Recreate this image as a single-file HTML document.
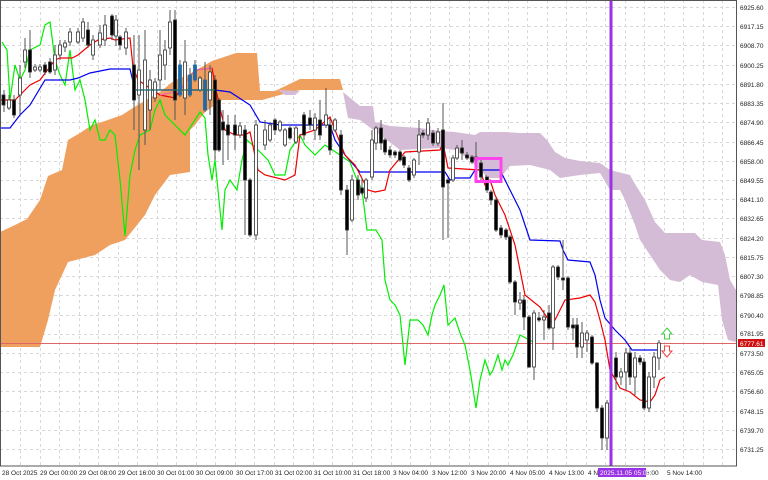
<!DOCTYPE html>
<html><head><meta charset="utf-8"><style>
html,body{margin:0;padding:0;background:#fff;width:768px;height:480px;overflow:hidden}
svg{display:block;font-family:"Liberation Sans",sans-serif}
</style></head><body>
<svg width="768" height="480" viewBox="0 0 768 480">
<rect width="768" height="480" fill="#fff"/>
<g stroke="#d8d8d8" stroke-width="1" stroke-dasharray="3,3">
<line x1="0" y1="7.5" x2="736" y2="7.5"/><line x1="0" y1="26.5" x2="736" y2="26.5"/><line x1="0" y1="45.5" x2="736" y2="45.5"/><line x1="0" y1="65.5" x2="736" y2="65.5"/><line x1="0" y1="84.5" x2="736" y2="84.5"/><line x1="0" y1="103.5" x2="736" y2="103.5"/><line x1="0" y1="122.5" x2="736" y2="122.5"/><line x1="0" y1="142.5" x2="736" y2="142.5"/><line x1="0" y1="161.5" x2="736" y2="161.5"/><line x1="0" y1="180.5" x2="736" y2="180.5"/><line x1="0" y1="199.5" x2="736" y2="199.5"/><line x1="0" y1="218.5" x2="736" y2="218.5"/><line x1="0" y1="238.5" x2="736" y2="238.5"/><line x1="0" y1="257.5" x2="736" y2="257.5"/><line x1="0" y1="276.5" x2="736" y2="276.5"/><line x1="0" y1="295.5" x2="736" y2="295.5"/><line x1="0" y1="315.5" x2="736" y2="315.5"/><line x1="0" y1="334.5" x2="736" y2="334.5"/><line x1="0" y1="353.5" x2="736" y2="353.5"/><line x1="0" y1="372.5" x2="736" y2="372.5"/><line x1="0" y1="391.5" x2="736" y2="391.5"/><line x1="0" y1="411.5" x2="736" y2="411.5"/><line x1="0" y1="430.5" x2="736" y2="430.5"/><line x1="0" y1="449.5" x2="736" y2="449.5"/>
<line x1="20.5" y1="0" x2="20.5" y2="466"/><line x1="40.5" y1="0" x2="40.5" y2="466"/><line x1="59.5" y1="0" x2="59.5" y2="466"/><line x1="79.5" y1="0" x2="79.5" y2="466"/><line x1="98.5" y1="0" x2="98.5" y2="466"/><line x1="118.5" y1="0" x2="118.5" y2="466"/><line x1="137.5" y1="0" x2="137.5" y2="466"/><line x1="157.5" y1="0" x2="157.5" y2="466"/><line x1="176.5" y1="0" x2="176.5" y2="466"/><line x1="196.5" y1="0" x2="196.5" y2="466"/><line x1="215.5" y1="0" x2="215.5" y2="466"/><line x1="235.5" y1="0" x2="235.5" y2="466"/><line x1="254.5" y1="0" x2="254.5" y2="466"/><line x1="274.5" y1="0" x2="274.5" y2="466"/><line x1="293.5" y1="0" x2="293.5" y2="466"/><line x1="313.5" y1="0" x2="313.5" y2="466"/><line x1="332.5" y1="0" x2="332.5" y2="466"/><line x1="352.5" y1="0" x2="352.5" y2="466"/><line x1="371.5" y1="0" x2="371.5" y2="466"/><line x1="391.5" y1="0" x2="391.5" y2="466"/><line x1="410.5" y1="0" x2="410.5" y2="466"/><line x1="430.5" y1="0" x2="430.5" y2="466"/><line x1="449.5" y1="0" x2="449.5" y2="466"/><line x1="469.5" y1="0" x2="469.5" y2="466"/><line x1="488.5" y1="0" x2="488.5" y2="466"/><line x1="508.5" y1="0" x2="508.5" y2="466"/><line x1="527.5" y1="0" x2="527.5" y2="466"/><line x1="547.5" y1="0" x2="547.5" y2="466"/><line x1="566.5" y1="0" x2="566.5" y2="466"/><line x1="586.5" y1="0" x2="586.5" y2="466"/><line x1="605.5" y1="0" x2="605.5" y2="466"/><line x1="625.5" y1="0" x2="625.5" y2="466"/><line x1="644.5" y1="0" x2="644.5" y2="466"/><line x1="664.5" y1="0" x2="664.5" y2="466"/><line x1="683.5" y1="0" x2="683.5" y2="466"/><line x1="703.5" y1="0" x2="703.5" y2="466"/><line x1="722.5" y1="0" x2="722.5" y2="466"/>
</g>
<polygon fill="#f0a05e" points="0,232 15,225 27,219 40,200 48,176 62,170 68,140 80,133 92,125 105,121 122,115 136,106 160,92 175,80 188,75 212,61 236,53 257,53 260,91 275,91 300,79 340,79 343,90 300,90 280,95 262,100 240,100 222,100 205,112 195,125 190,130 190,172 170,175 155,195 145,215 125,240 110,245 95,255 68,262 55,290 48,320 40,347 0,347"/>
<polygon fill="#d5bcd6" points="278,90 300,91 295,95 285,95"/>
<polygon fill="#d5bcd6" points="343,92 360,106 373,106 375,122 390,126 420,128 440,131 455,132 475,135 480,132 505,132 520,133 540,133 547,140 555,152 565,158 580,161 600,163 610,170 630,175 635,184 645,200 655,222 665,233 695,233 702,240 720,242 725,255 730,280 736,290 736,342 728,340 722,320 718,285 702,282 690,275 680,282 670,280 660,270 650,255 640,240 635,225 625,200 620,190 610,190 600,173 580,175 560,178 550,170 530,165 510,166 500,178 488,178 470,160 455,150 440,148 400,150 380,135 360,120 348,118"/>
<line x1="0" y1="343.5" x2="736" y2="343.5" stroke="#d66" stroke-width="1"/>
<polyline fill="none" stroke="#00ee00" stroke-width="1.2" points="2,42 7,50 10,100 15,65 20,80 25,70 30,50 40,45 45,25 50,22 55,60 60,75 65,85 70,50 75,90 80,80 85,100 90,130 95,120 100,140 105,140 110,130 115,135 120,180 125,236 130,175 135,150 140,135 150,130 155,110 160,100 165,115 175,125 185,135 195,120 200,112 205,118 208,155 212,180 215,160 222,230 225,190 230,180 237,190 242,160 247,140 258,150 268,160 275,175 285,175 290,150 300,135 305,145 315,155 325,145 340,155 350,162 355,175 362,190 367,230 376,230 382,240 385,280 390,300 395,305 400,315 405,365 410,320 418,320 423,325 428,335 432,315 435,305 440,295 444,285 448,325 455,318 460,333 465,345 470,370 476,408 480,380 485,360 490,375 493,370 498,355 502,370 505,360 508,365 513,355 520,335 535,343"/>
<polyline fill="none" stroke="#0000ee" stroke-width="1.2" points="0,128 10,128 20,115 30,105 45,80 70,80 78,78 90,73 110,69 130,69 135,90 215,90 230,92 250,105 260,122 280,125 330,125 335,140 345,155 360,172 445,172 450,180 455,178 470,178 475,170 500,170 505,180 510,190 515,200 520,210 530,240 560,241 563,250 568,260 590,262 595,275 600,300 605,318 615,330 625,340 632,350 660,350"/>
<polyline fill="none" stroke="#ee0000" stroke-width="1.2" points="0,100 15,100 20,95 30,85 40,80 55,60 60,58 72,58 78,55 90,45 98,40 110,38 115,40 130,38 133,67 138,80 160,95 175,98 180,90 195,70 212,68 216,90 225,130 235,135 245,135 250,132 258,170 265,175 285,180 295,175 300,135 315,130 330,117 335,130 345,155 355,165 368,190 375,192 385,190 390,170 405,152 440,150 443,143 448,168 480,170 485,185 490,180 495,195 505,215 515,245 520,270 525,295 540,307 550,322 555,320 560,310 565,300 580,298 590,295 595,302 600,320 605,340 610,370 620,388 630,392 640,400 650,402 655,395 660,380 665,377"/>
<polyline fill="none" stroke="#ee66aa" stroke-width="1.2" points="160,95 170,93 180,90 195,70 212,68"/>
<g stroke="#555" stroke-width="1">
<line x1="4" y1="90" x2="4" y2="112"/><line x1="9" y1="95" x2="9" y2="110"/><line x1="14" y1="95" x2="14" y2="118"/><line x1="20" y1="65" x2="20" y2="115"/><line x1="25" y1="38" x2="25" y2="68"/><line x1="30" y1="30" x2="30" y2="78"/><line x1="35" y1="64" x2="35" y2="72"/><line x1="40" y1="64" x2="40" y2="72"/><line x1="45" y1="62" x2="45" y2="75"/><line x1="50" y1="58" x2="50" y2="74"/><line x1="55" y1="45" x2="55" y2="75"/><line x1="60" y1="40" x2="60" y2="60"/><line x1="65" y1="40" x2="65" y2="52"/><line x1="70" y1="28" x2="70" y2="46"/><line x1="78" y1="28" x2="78" y2="44"/><line x1="83" y1="18" x2="83" y2="42"/><line x1="88" y1="22" x2="88" y2="48"/><line x1="93" y1="35" x2="93" y2="60"/><line x1="100" y1="25" x2="100" y2="48"/><line x1="105" y1="15" x2="105" y2="46"/><line x1="112" y1="14" x2="112" y2="40"/><line x1="116" y1="15" x2="116" y2="46"/><line x1="120" y1="35" x2="120" y2="50"/><line x1="126" y1="28" x2="126" y2="55"/>
<line x1="134" y1="35" x2="134" y2="130"/><line x1="139" y1="35" x2="139" y2="170"/><line x1="145" y1="30" x2="145" y2="145"/><line x1="150" y1="70" x2="150" y2="130"/><line x1="155" y1="78" x2="155" y2="102"/><line x1="160" y1="30" x2="160" y2="90"/><line x1="165" y1="40" x2="165" y2="80"/><line x1="170" y1="10" x2="170" y2="55"/><line x1="175" y1="10" x2="175" y2="120"/><line x1="180" y1="60" x2="180" y2="97"/><line x1="185" y1="40" x2="185" y2="115"/><line x1="190" y1="68" x2="190" y2="97"/><line x1="195" y1="60" x2="195" y2="82"/><line x1="200" y1="76" x2="200" y2="92"/><line x1="205" y1="62" x2="205" y2="112"/><line x1="210" y1="65" x2="210" y2="115"/><line x1="215" y1="75" x2="215" y2="160"/>
<line x1="219" y1="98" x2="219" y2="152"/><line x1="223" y1="110" x2="223" y2="165"/><line x1="228" y1="115" x2="228" y2="160"/><line x1="235" y1="115" x2="235" y2="150"/><line x1="240" y1="122" x2="240" y2="138"/><line x1="245" y1="125" x2="245" y2="235"/><line x1="250" y1="178" x2="250" y2="237"/><line x1="256" y1="120" x2="256" y2="240"/><line x1="265" y1="120" x2="265" y2="150"/><line x1="270" y1="122" x2="270" y2="142"/><line x1="275" y1="118" x2="275" y2="135"/><line x1="280" y1="120" x2="280" y2="132"/><line x1="285" y1="128" x2="285" y2="147"/><line x1="290" y1="126" x2="290" y2="140"/><line x1="296" y1="126" x2="296" y2="144"/><line x1="304" y1="112" x2="304" y2="140"/><line x1="310" y1="110" x2="310" y2="130"/><line x1="315" y1="113" x2="315" y2="140"/><line x1="320" y1="100" x2="320" y2="140"/><line x1="326" y1="88" x2="326" y2="128"/><line x1="330" y1="118" x2="330" y2="155"/><line x1="335" y1="118" x2="335" y2="132"/><line x1="341" y1="130" x2="341" y2="195"/><line x1="347" y1="185" x2="347" y2="255"/><line x1="352" y1="175" x2="352" y2="222"/><line x1="358" y1="175" x2="358" y2="200"/><line x1="362" y1="178" x2="362" y2="195"/><line x1="366" y1="178" x2="366" y2="202"/>
<line x1="372" y1="130" x2="372" y2="180"/><line x1="376" y1="126" x2="376" y2="150"/><line x1="381" y1="120" x2="381" y2="150"/><line x1="385" y1="138" x2="385" y2="155"/><line x1="390" y1="146" x2="390" y2="158"/><line x1="395" y1="150" x2="395" y2="158"/><line x1="400" y1="150" x2="400" y2="162"/><line x1="404" y1="155" x2="404" y2="168"/><line x1="409" y1="165" x2="409" y2="182"/><line x1="414" y1="158" x2="414" y2="178"/><line x1="419" y1="120" x2="419" y2="165"/><line x1="423" y1="130" x2="423" y2="138"/><line x1="428" y1="118" x2="428" y2="140"/><line x1="433" y1="130" x2="433" y2="146"/><line x1="438" y1="128" x2="438" y2="146"/><line x1="443" y1="103" x2="443" y2="240"/><line x1="448" y1="178" x2="448" y2="238"/><line x1="453" y1="155" x2="453" y2="182"/><line x1="457" y1="145" x2="457" y2="160"/><line x1="462" y1="140" x2="462" y2="160"/><line x1="467" y1="152" x2="467" y2="160"/><line x1="472" y1="155" x2="472" y2="164"/><line x1="476" y1="142" x2="476" y2="180"/><line x1="481" y1="160" x2="481" y2="180"/><line x1="486" y1="175" x2="486" y2="182"/><line x1="487" y1="182" x2="487" y2="193"/><line x1="491" y1="190" x2="491" y2="205"/><line x1="496" y1="198" x2="496" y2="232"/><line x1="501" y1="225" x2="501" y2="238"/><line x1="506" y1="228" x2="506" y2="240"/><line x1="510" y1="235" x2="510" y2="284"/><line x1="515" y1="280" x2="515" y2="315"/><line x1="520" y1="292" x2="520" y2="310"/><line x1="524" y1="295" x2="524" y2="330"/><line x1="529" y1="315" x2="529" y2="368"/><line x1="534" y1="310" x2="534" y2="380"/><line x1="539" y1="312" x2="539" y2="322"/><line x1="544" y1="310" x2="544" y2="340"/><line x1="549" y1="305" x2="549" y2="330"/><line x1="553" y1="265" x2="553" y2="350"/><line x1="558" y1="265" x2="558" y2="280"/><line x1="563" y1="240" x2="563" y2="290"/><line x1="568" y1="276" x2="568" y2="330"/><line x1="573" y1="318" x2="573" y2="340"/><line x1="577" y1="318" x2="577" y2="358"/><line x1="582" y1="322" x2="582" y2="358"/><line x1="587" y1="330" x2="587" y2="352"/><line x1="592" y1="335" x2="592" y2="365"/><line x1="597" y1="362" x2="597" y2="412"/><line x1="602" y1="405" x2="602" y2="450"/><line x1="607" y1="400" x2="607" y2="450"/><line x1="616" y1="352" x2="616" y2="390"/><line x1="621" y1="368" x2="621" y2="385"/><line x1="626" y1="348" x2="626" y2="390"/><line x1="630" y1="348" x2="630" y2="385"/><line x1="635" y1="352" x2="635" y2="395"/><line x1="640" y1="355" x2="640" y2="365"/><line x1="644" y1="358" x2="644" y2="410"/><line x1="649" y1="372" x2="649" y2="412"/><line x1="654" y1="352" x2="654" y2="388"/><line x1="659" y1="340" x2="659" y2="370"/>
</g>
<g stroke="#333" stroke-width="0.8">
<rect x="2" y="95" width="3" height="10" fill="#000"/><rect x="7.5" y="100" width="3" height="8" fill="#fff"/><rect x="12.5" y="100" width="3" height="15" fill="#000"/><rect x="18.5" y="78" width="3" height="17" fill="#fff"/><rect x="23.5" y="50" width="3" height="12" fill="#fff"/><rect x="28.5" y="50" width="3" height="22" fill="#000"/><rect x="33.5" y="67" width="3" height="3" fill="#fff"/><rect x="38.5" y="67" width="3" height="3" fill="#fff"/><rect x="43.5" y="65" width="3" height="7" fill="#000"/><rect x="48.5" y="62" width="3" height="10" fill="#000"/><rect x="53.5" y="55" width="3" height="15" fill="#fff"/><rect x="58.5" y="45" width="3" height="10" fill="#fff"/><rect x="63.5" y="43" width="3" height="4" fill="#fff"/><rect x="68.5" y="32" width="3" height="10" fill="#fff"/><rect x="76.5" y="32" width="3" height="10" fill="#fff"/><rect x="81.5" y="22" width="3" height="16" fill="#fff"/><rect x="86.5" y="30" width="3" height="15" fill="#000"/><rect x="91.5" y="40" width="3" height="15" fill="#fff"/><rect x="98.5" y="33" width="3" height="12" fill="#fff"/><rect x="103.5" y="25" width="3" height="15" fill="#fff"/><rect x="110.5" y="16" width="3" height="19" fill="#000"/><rect x="114.5" y="20" width="3" height="16" fill="#fff"/><rect x="118.5" y="37" width="3" height="8" fill="#000"/><rect x="124.5" y="32" width="3" height="16" fill="#fff"/>
<rect x="132.5" y="65" width="3" height="35" fill="#000"/><rect x="137.5" y="70" width="3" height="25" fill="#fff"/><rect x="143.5" y="60" width="3" height="70" fill="#fff"/><rect x="148.5" y="80" width="3" height="30" fill="#fff"/><rect x="153.5" y="82" width="3" height="16" fill="#fff"/><rect x="158.5" y="55" width="3" height="25" fill="#fff"/><rect x="163.5" y="50" width="3" height="15" fill="#fff"/><rect x="168.5" y="22" width="3" height="26" fill="#fff"/><rect x="173.5" y="20" width="3" height="80" fill="#000"/><rect x="178.5" y="65" width="3" height="30" fill="#1f6aa5" stroke="#1f6aa5"/><rect x="183.5" y="62" width="3" height="36" fill="#fff"/><rect x="188.5" y="75" width="3" height="20" fill="#1f6aa5" stroke="#1f6aa5"/><rect x="193.5" y="65" width="3" height="15" fill="#1f6aa5" stroke="#1f6aa5"/><rect x="198.5" y="78" width="3" height="12" fill="#fff"/><rect x="203.5" y="80" width="3" height="30" fill="#1f6aa5" stroke="#1f6aa5"/><rect x="208.5" y="72" width="3" height="28" fill="#fff"/><rect x="213.5" y="80" width="3" height="70" fill="#000"/>
<rect x="217.5" y="100" width="3" height="50" fill="#000"/><rect x="221.5" y="122" width="3" height="8" fill="#000"/><rect x="226.5" y="125" width="3" height="10" fill="#000"/><rect x="233.5" y="125" width="3" height="10" fill="#000"/><rect x="238.5" y="126" width="3" height="9" fill="#fff"/><rect x="243.5" y="130" width="3" height="50" fill="#000"/><rect x="248.5" y="180" width="3" height="55" fill="#000"/><rect x="254.5" y="125" width="3" height="110" fill="#fff"/><rect x="263.5" y="130" width="3" height="15" fill="#fff"/><rect x="268.5" y="125" width="3" height="15" fill="#fff"/><rect x="273.5" y="120" width="3" height="10" fill="#000"/><rect x="278.5" y="122" width="3" height="8" fill="#fff"/><rect x="283.5" y="130" width="3" height="15" fill="#fff"/><rect x="288.5" y="128" width="3" height="10" fill="#000"/><rect x="294.5" y="128" width="3" height="14" fill="#fff"/><rect x="302.5" y="115" width="3" height="20" fill="#000"/><rect x="308.5" y="118" width="3" height="7" fill="#000"/><rect x="313.5" y="118" width="3" height="12" fill="#fff"/><rect x="318.5" y="120" width="3" height="15" fill="#000"/><rect x="324.5" y="115" width="3" height="10" fill="#fff"/><rect x="328.5" y="125" width="3" height="25" fill="#000"/><rect x="333.5" y="120" width="3" height="10" fill="#fff"/><rect x="339.5" y="135" width="3" height="55" fill="#000"/><rect x="345.5" y="190" width="3" height="40" fill="#000"/><rect x="350.5" y="180" width="3" height="40" fill="#fff"/><rect x="356.5" y="180" width="3" height="15" fill="#000"/><rect x="360.5" y="188" width="3" height="5" fill="#000"/><rect x="364.5" y="180" width="3" height="18" fill="#fff"/>
<rect x="370.5" y="140" width="3" height="37" fill="#fff"/><rect x="374.5" y="128" width="3" height="15" fill="#fff"/><rect x="379.5" y="128" width="3" height="15" fill="#000"/><rect x="383.5" y="140" width="3" height="12" fill="#000"/><rect x="388.5" y="150" width="3" height="5" fill="#000"/><rect x="393.5" y="152" width="3" height="3" fill="#000"/><rect x="398.5" y="152" width="3" height="8" fill="#000"/><rect x="402.5" y="157" width="3" height="8" fill="#000"/><rect x="407.5" y="168" width="3" height="12" fill="#000"/><rect x="412.5" y="160" width="3" height="15" fill="#fff"/><rect x="417.5" y="135" width="3" height="17" fill="#fff"/><rect x="421.5" y="133" width="3" height="2" fill="#000"/><rect x="426.5" y="123" width="3" height="12" fill="#fff"/><rect x="431.5" y="133" width="3" height="10" fill="#000"/><rect x="436.5" y="132" width="3" height="11" fill="#fff"/><rect x="441.5" y="130" width="3" height="57" fill="#000"/><rect x="446.5" y="180" width="3" height="3" fill="#000"/><rect x="451.5" y="158" width="3" height="22" fill="#fff"/><rect x="455.5" y="148" width="3" height="10" fill="#fff"/><rect x="460.5" y="148" width="3" height="5" fill="#000"/><rect x="465.5" y="155" width="3" height="3" fill="#000"/><rect x="470.5" y="157" width="3" height="5" fill="#000"/><rect x="474.5" y="157" width="3" height="3" fill="#000"/><rect x="479.5" y="163" width="3" height="14" fill="#000"/><rect x="485.5" y="177" width="3" height="4" fill="#000"/><rect x="485.5" y="183" width="3" height="7" fill="#000"/><rect x="489.5" y="192" width="3" height="8" fill="#000"/><rect x="494.5" y="200" width="3" height="30" fill="#000"/><rect x="499.5" y="228" width="3" height="7" fill="#000"/><rect x="504.5" y="230" width="3" height="7" fill="#000"/><rect x="508.5" y="237" width="3" height="45" fill="#000"/><rect x="513.5" y="282" width="3" height="20" fill="#000"/><rect x="518.5" y="300" width="3" height="3" fill="#fff"/><rect x="522.5" y="300" width="3" height="17" fill="#000"/><rect x="527.5" y="317" width="3" height="50" fill="#000"/><rect x="532.5" y="313" width="3" height="54" fill="#fff"/><rect x="537.5" y="318" width="3" height="2" fill="#000"/><rect x="542.5" y="317" width="3" height="3" fill="#fff"/><rect x="547.5" y="313" width="3" height="15" fill="#000"/><rect x="551.5" y="267" width="3" height="61" fill="#fff"/><rect x="556.5" y="267" width="3" height="10" fill="#000"/><rect x="561.5" y="278" width="3" height="2" fill="#000"/><rect x="566.5" y="278" width="3" height="49" fill="#000"/><rect x="571.5" y="325" width="3" height="3" fill="#000"/><rect x="575.5" y="325" width="3" height="22" fill="#000"/><rect x="580.5" y="333" width="3" height="14" fill="#fff"/><rect x="585.5" y="333" width="3" height="7" fill="#fff"/><rect x="590.5" y="337" width="3" height="26" fill="#000"/><rect x="595.5" y="363" width="3" height="45" fill="#000"/><rect x="600.5" y="408" width="3" height="30" fill="#000"/><rect x="605.5" y="403" width="3" height="35" fill="#fff"/><rect x="614.5" y="358" width="3" height="19" fill="#000"/><rect x="619.5" y="372" width="3" height="5" fill="#fff"/><rect x="624.5" y="353" width="3" height="19" fill="#fff"/><rect x="628.5" y="353" width="3" height="24" fill="#000"/><rect x="633.5" y="358" width="3" height="19" fill="#fff"/><rect x="638.5" y="358" width="3" height="4" fill="#000"/><rect x="642.5" y="362" width="3" height="46" fill="#000"/><rect x="647.5" y="377" width="3" height="31" fill="#fff"/><rect x="652.5" y="357" width="3" height="20" fill="#fff"/><rect x="657.5" y="343" width="3" height="15" fill="#fff"/>
</g>
<polyline fill="none" stroke="#2a7070" stroke-width="1.2" points="135,90 215,90"/>
<rect x="476" y="158.5" width="25" height="23" fill="none" stroke="#ff44ee" stroke-width="3"/>
<path d="M667,328 L672,334 L669.5,334 L669.5,339 L664.5,339 L664.5,334 L662,334 Z" fill="#fff" stroke="#4c4" stroke-width="1"/>
<path d="M667,357 L672,351 L669.5,351 L669.5,346 L664.5,346 L664.5,351 L662,351 Z" fill="#fff" stroke="#e44" stroke-width="1"/>
<rect x="609.5" y="0" width="3" height="466" fill="#9933e6"/>
<rect x="0.5" y="0.5" width="736" height="465.5" fill="none" stroke="#555" stroke-width="1"/>
<g font-size="6.5" fill="#222">
<text x="740" y="10">6925.60</text><text x="740" y="29">6917.15</text><text x="740" y="48">6908.70</text><text x="740" y="68">6900.25</text><text x="740" y="87">6891.80</text><text x="740" y="106">6883.35</text><text x="740" y="125">6874.90</text><text x="740" y="145">6866.45</text><text x="740" y="164">6858.00</text><text x="740" y="183">6849.55</text><text x="740" y="202">6841.10</text><text x="740" y="221">6832.65</text><text x="740" y="241">6824.20</text><text x="740" y="260">6815.75</text><text x="740" y="279">6807.30</text><text x="740" y="298">6798.85</text><text x="740" y="318">6790.40</text><text x="740" y="336">6781.95</text><text x="740" y="356">6773.50</text><text x="740" y="375">6765.05</text><text x="740" y="394">6756.60</text><text x="740" y="414">6748.15</text><text x="740" y="433">6739.70</text><text x="740" y="452">6731.25</text>
</g>
<rect x="738" y="339" width="27" height="8" fill="#d01010"/>
<text x="740" y="346" font-size="6.5" fill="#fff">6777.61</text>
<g font-size="6.5" fill="#222">
<text x="2" y="475">28 Oct 2025</text><text x="40" y="475">29 Oct 00:00</text><text x="79" y="475">29 Oct 08:00</text><text x="118" y="475">29 Oct 16:00</text><text x="157" y="475">30 Oct 01:00</text><text x="196" y="475">30 Oct 09:00</text><text x="236" y="475">30 Oct 17:00</text><text x="275" y="475">31 Oct 02:00</text><text x="314" y="475">31 Oct 10:00</text><text x="353" y="475">31 Oct 18:00</text><text x="393" y="475">3 Nov 04:00</text><text x="432" y="475">3 Nov 12:00</text><text x="471" y="475">3 Nov 20:00</text><text x="510" y="475">4 Nov 05:00</text><text x="549" y="475">4 Nov 13:00</text><text x="588" y="475">4 No</text><text x="646" y="475">6:00</text><text x="667" y="475">5 Nov 14:00</text>
</g>
<rect x="598" y="468" width="48" height="9" fill="#9933e6"/>
<text x="600" y="475" font-size="6.5" fill="#fff">2025.11.05 05:00</text>
</svg>
</body></html>
